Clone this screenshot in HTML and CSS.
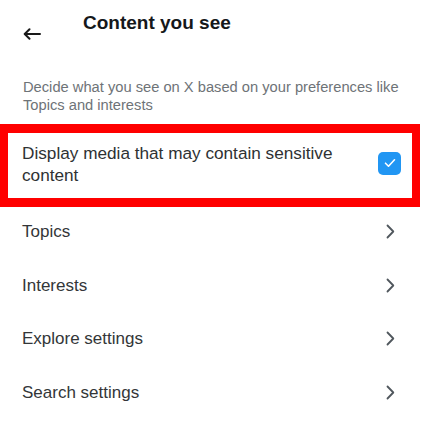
FILE: index.html
```html
<!DOCTYPE html>
<html lang="en">
<head>
<meta charset="utf-8">
<title>Content you see</title>
<link rel="stylesheet" href="styles.css">
</head>
<body>
<div class="page">
  <header class="header">
    <svg class="back" width="18" height="12" viewBox="0 0 18 12" aria-hidden="true">
      <path d="M17 6H2M6.5 1.2L1.7 6l4.8 4.8" fill="none" stroke="#1a1a1a" stroke-width="2" stroke-linecap="round" stroke-linejoin="round"/>
    </svg>
    <h1 class="title">Content you see</h1>
  </header>
  <p class="intro">Decide what you see on X based on your preferences like Topics and interests</p>
  <div class="sensitive">
    <span class="sensitive-text">Display media that may contain sensitive content</span>
    <span class="checkbox">
      <svg width="12" height="10" viewBox="0 0 12 10" aria-hidden="true">
        <path d="M1.5 5.2l3 3L10.5 1.8" fill="none" stroke="#fff" stroke-width="1.6" stroke-linecap="round" stroke-linejoin="round"/>
      </svg>
    </span>
  </div>
  <ul class="menu">
    <li class="row"><span>Topics</span><svg class="chev" width="9" height="15" viewBox="0 0 9 15"><path d="M1.5 1.5L7.3 7.5 1.5 13.5" fill="none" stroke="#50575d" stroke-width="1.8" stroke-linecap="round" stroke-linejoin="round"/></svg></li>
    <li class="row"><span>Interests</span><svg class="chev" width="9" height="15" viewBox="0 0 9 15"><path d="M1.5 1.5L7.3 7.5 1.5 13.5" fill="none" stroke="#50575d" stroke-width="1.8" stroke-linecap="round" stroke-linejoin="round"/></svg></li>
    <li class="row"><span>Explore settings</span><svg class="chev" width="9" height="15" viewBox="0 0 9 15"><path d="M1.5 1.5L7.3 7.5 1.5 13.5" fill="none" stroke="#50575d" stroke-width="1.8" stroke-linecap="round" stroke-linejoin="round"/></svg></li>
    <li class="row"><span>Search settings</span><svg class="chev" width="9" height="15" viewBox="0 0 9 15"><path d="M1.5 1.5L7.3 7.5 1.5 13.5" fill="none" stroke="#50575d" stroke-width="1.8" stroke-linecap="round" stroke-linejoin="round"/></svg></li>
  </ul>
</div>
</body>
</html>
```

FILE: styles.css
```css
* { box-sizing: border-box; }
html, body { margin: 0; padding: 0; background: #fff; }
body {
  font-family: "Liberation Sans", Arial, sans-serif;
  color: #333638;
  width: 428px;
  height: 429px;
  overflow: hidden;
}
.page { display: flex; flex-direction: column; }
.header {
  display: flex;
  align-items: flex-start;
  padding: 12px 0 0 23px;
  height: 78px;
}
.back { margin-top: 16px; flex: none; }
.title {
  margin: 0 0 0 42px;
  font-size: 19px;
  line-height: 22px;
  font-weight: 700;
  color: #15181b;
}
.intro {
  margin: 0;
  padding: 0 20px 0 23px;
  font-size: 14.7px;
  line-height: 18px;
  color: #6e7377;
  height: 46px;
}
.sensitive {
  width: 420px;
  border: 8px solid #ff0000;
  border-top-width: 9px;
  border-bottom-width: 9px;
  display: flex;
  align-items: center;
  justify-content: space-between;
  padding: 9px 11px 12px 14px;
}
.sensitive-text {
  font-size: 17.2px;
  line-height: 22px;
  width: 340px;
  color: #2e3133;
}
.checkbox {
  width: 23px;
  height: 23px;
  border-radius: 5px;
  background: #2196f3;
  display: flex;
  align-items: center;
  justify-content: center;
  margin-top: -2px;
}
.menu { list-style: none; margin: 0; padding: 0; }
.row {
  display: flex;
  align-items: center;
  justify-content: space-between;
  padding: 14px 33px 18px 22px;
  font-size: 17px;
  line-height: 21.5px;
  color: #333638;
}
.chev { flex: none; }
```
